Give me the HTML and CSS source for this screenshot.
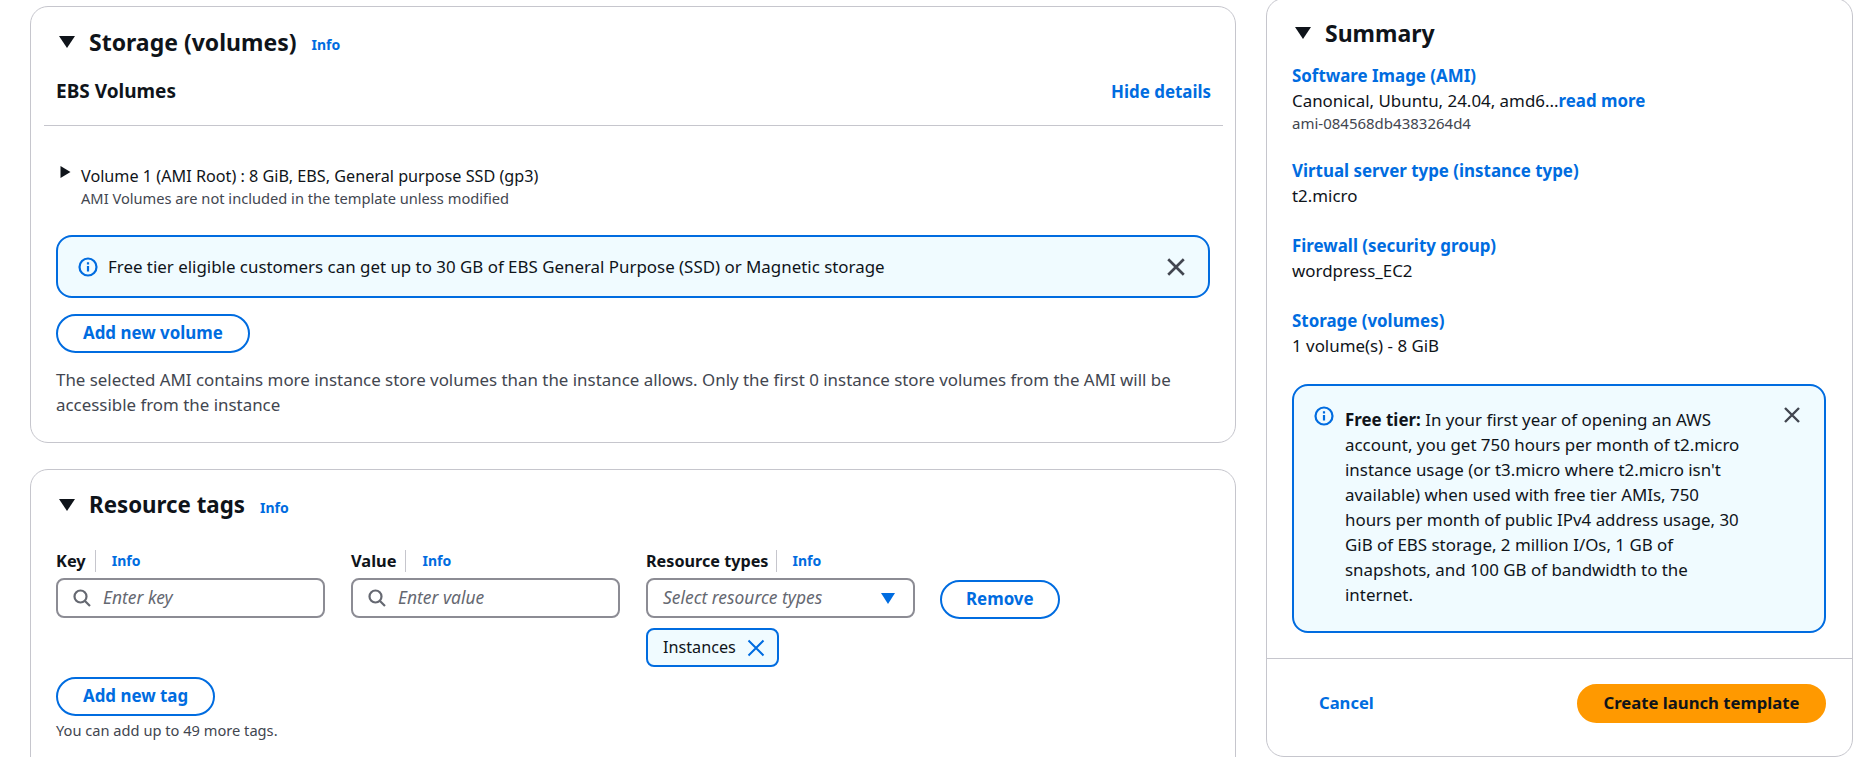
FILE: index.html
```html
<!DOCTYPE html>
<html lang="en">

<head>
    <meta charset="UTF-8">
    <title>Create launch template</title>
    <link rel="stylesheet" href="styles.css">
</head>

<body>
    <div class="page">
        <main class="main-col">
            <section class="card storage-card">
                <div class="card-head">
                    <svg class="caret-down" viewBox="0 0 16 12"><polygon points="0,0 16,0 8,12"/></svg>
                    <h2>Storage (volumes)</h2>
                    <a class="info">Info</a>
                </div>
                <div class="ebs-row">
                    <h3>EBS Volumes</h3>
                    <a class="link">Hide details</a>
                </div>
                <hr class="divider">
                <div class="volume-row">
                    <svg class="caret-right" viewBox="0 0 10 12"><polygon points="0,0 10,6 0,12"/></svg>
                    <div>
                        <div class="volume-title">Volume 1 (AMI Root) : 8 GiB, EBS, General purpose SSD (gp3)</div>
                        <div class="muted">AMI Volumes are not included in the template unless modified</div>
                    </div>
                </div>
                <div class="alert alert-wide">
                    <svg class="icon-info" viewBox="0 0 20 20"><circle cx="10" cy="10" r="8.5"/><path d="M10 9v5.5M10 5.2v2.2"/></svg>
                    <span class="alert-text">Free tier eligible customers can get up to 30 GB of EBS General Purpose (SSD) or Magnetic storage</span>
                    <svg class="icon-close" viewBox="0 0 18 18"><path d="M2 2l14 14M16 2L2 16"/></svg>
                </div>
                <button class="btn add-volume">Add new volume</button>
                <p class="note">The selected AMI contains more instance store volumes than the instance allows. Only the first 0 instance store volumes from the AMI will be accessible from the instance</p>
            </section>

            <section class="card tags-card">
                <div class="card-head">
                    <svg class="caret-down" viewBox="0 0 16 12"><polygon points="0,0 16,0 8,12"/></svg>
                    <h2>Resource tags</h2>
                    <a class="info">Info</a>
                </div>
                <div class="tag-grid">
                    <div class="field">
                        <div class="field-label"><label>Key</label><a class="info">Info</a></div>
                        <div class="input">
                            <svg class="icon-search" viewBox="0 0 18 18"><circle cx="7.5" cy="7.5" r="6"/><path d="M12 12l5 5"/></svg>
                            <span class="placeholder">Enter key</span>
                        </div>
                    </div>
                    <div class="field">
                        <div class="field-label"><label>Value</label><a class="info">Info</a></div>
                        <div class="input">
                            <svg class="icon-search" viewBox="0 0 18 18"><circle cx="7.5" cy="7.5" r="6"/><path d="M12 12l5 5"/></svg>
                            <span class="placeholder">Enter value</span>
                        </div>
                    </div>
                    <div class="field">
                        <div class="field-label"><label class="types-label">Resource types</label><a class="info">Info</a></div>
                        <div class="input select">
                            <span class="placeholder">Select resource types</span>
                            <svg class="caret-blue" viewBox="0 0 14 11"><polygon points="0,0 14,0 7,11"/></svg>
                        </div>
                        <div class="token">
                            <span>Instances</span>
                            <svg class="icon-token-x" viewBox="0 0 18 18"><path d="M1.5 1.5l15 15M16.5 1.5l-15 15"/></svg>
                        </div>
                    </div>
                    <button class="btn remove">Remove</button>
                </div>
                <button class="btn add-tag">Add new tag</button>
                <div class="muted tags-left">You can add up to 49 more tags.</div>
            </section>
        </main>

        <aside class="summary">
            <div class="summary-body">
                <div class="card-head summary-head">
                    <svg class="caret-down" viewBox="0 0 16 12"><polygon points="0,0 16,0 8,12"/></svg>
                    <h2>Summary</h2>
                </div>
                <div class="summary-item">
                    <a class="link">Software Image (AMI)</a>
                    <div>Canonical, Ubuntu, 24.04, amd6...<a class="link">read more</a></div>
                    <div class="muted ami-id">ami-084568db4383264d4</div>
                </div>
                <div class="summary-item">
                    <a class="link">Virtual server type (instance type)</a>
                    <div>t2.micro</div>
                </div>
                <div class="summary-item">
                    <a class="link">Firewall (security group)</a>
                    <div>wordpress_EC2</div>
                </div>
                <div class="summary-item last-item">
                    <a class="link">Storage (volumes)</a>
                    <div>1 volume(s) - 8 GiB</div>
                </div>
                <div class="alert alert-tall">
                    <svg class="icon-info" viewBox="0 0 20 20"><circle cx="10" cy="10" r="8.5"/><path d="M10 9v5.5M10 5.2v2.2"/></svg>
                    <p class="alert-text"><strong>Free tier:</strong> In your first year of opening an AWS account, you get 750 hours per month of t2.micro instance usage (or t3.micro where t2.micro isn't available) when used with free tier AMIs, 750 hours per month of public IPv4 address usage, 30 GiB of EBS storage, 2 million I/Os, 1 GB of snapshots, and 100 GB of bandwidth to the internet.</p>
                    <svg class="icon-close" viewBox="0 0 18 18"><path d="M2 2l14 14M16 2L2 16"/></svg>
                </div>
            </div>
            <div class="summary-foot">
                <a class="link cancel">Cancel</a>
                <button class="btn primary">Create launch template</button>
            </div>
        </aside>
    </div>
</body>

</html>
```

FILE: styles.css
```css
* {
    box-sizing: border-box;
}

body {
    font-family: 'Noto Sans', sans-serif;
    font-size: 16.9px;
    line-height: 25px;
    color: #0f141a;
    background-color: #fff;
    margin: 0;
}

.page {
    display: flex;
    gap: 30px;
    height: 757px;
    padding-left: 30px;
    overflow: hidden;
}

.main-col {
    width: 1206px;
    flex-shrink: 0;
    padding-top: 6px;
}

.card {
    border: 1px solid #c6c6cd;
    border-radius: 18px;
    padding: 20px 24px 25px 25px;
}

.tags-card {
    margin-top: 26px;
    height: 400px;
}

.card-head {
    display: flex;
    align-items: center;
    height: 30px;
}

.card-head h2 {
    font-size: 23px;
    line-height: 30px;
    font-weight: 700;
    margin: 0 15px 0 14px;
}

.tags-card .card-head h2 {
    font-size: 22.3px;
}

.caret-down {
    width: 16px;
    height: 12px;
    margin-left: 3px;
    fill: #0f141a;
}

a {
    cursor: pointer;
}

.info {
    color: #006ce0;
    font-size: 14px;
    font-weight: 700;
    line-height: 20px;
}

.card-head .info {
    margin-top: 5px;
}

.link {
    color: #006ce0;
    font-weight: 700;
}

.ebs-row {
    display: flex;
    justify-content: space-between;
    align-items: center;
    height: 24px;
    margin-top: 22px;
}

.ebs-row h3 {
    font-size: 19px;
    margin: 0;
}

.divider {
    border: none;
    border-top: 1px solid #c6c6cd;
    margin: 22px -12px 0 -12px;
}

.volume-row {
    display: flex;
    margin-top: 38px;
}

.caret-right {
    width: 11px;
    height: 12px;
    margin: 2px 10px 0 4px;
    fill: #0f141a;
}

.volume-title {
    line-height: 24px;
    font-size: 16.2px;
}

.muted {
    font-size: 14.65px;
    line-height: 20px;
    color: #424650;
}

.alert {
    display: flex;
    border: 2px solid #006ce0;
    border-radius: 16px;
    background-color: #f0fbff;
}

.alert-wide {
    align-items: center;
    height: 63px;
    margin: 27px 1px 0 0;
    padding: 0 22px 0 20px;
}

.alert-wide .alert-text {
    flex: 1;
    margin-left: 10px;
}

.alert-wide .icon-close {
    width: 20px;
    height: 20px;
}

.icon-info {
    width: 20px;
    height: 20px;
    flex-shrink: 0;
    fill: none;
    stroke: #006ce0;
    stroke-width: 2.2;
}

.icon-close {
    width: 18px;
    height: 18px;
    flex-shrink: 0;
    fill: none;
    stroke: #424650;
    stroke-width: 2.4;
}

.btn {
    display: block;
    font-family: inherit;
    font-size: 16.9px;
    font-weight: 700;
    height: 39px;
    padding: 0 25px 2px 25px;
    color: #006ce0;
    background-color: #fff;
    border: 2px solid #006ce0;
    border-radius: 20px;
    cursor: pointer;
}

.add-volume {
    margin-top: 16px;
}

.note {
    margin: 14px 0 0 0;
    color: #424650;
}

.tag-grid {
    display: grid;
    grid-template-columns: 269px 269px 269px auto;
    column-gap: 26px;
    justify-content: start;
    margin-top: 29px;
}

.field-label {
    display: flex;
    align-items: center;
    height: 22px;
    line-height: 22px;
    padding-top: 2px;
}

.field-label label {
    font-size: 16.4px;
    font-weight: 700;
    padding-right: 9px;
    border-right: 1px solid #c6c6cd;
    margin-right: 16px;
}

.field-label .types-label {
    font-size: 16.2px;
    padding-right: 8px;
    margin-right: 15px;
}

.input {
    display: flex;
    align-items: center;
    height: 40px;
    margin-top: 7px;
    padding-left: 15px;
    border: 2px solid #8c8c94;
    border-radius: 8px;
    background-color: #fff;
}

.icon-search {
    width: 18px;
    height: 18px;
    fill: none;
    stroke: #656871;
    stroke-width: 2.2;
    margin-right: 12px;
}

.placeholder {
    font-size: 17.4px;
    font-style: italic;
    color: #656871;
    padding-bottom: 2px;
}

.select {
    justify-content: space-between;
    padding-right: 18px;
}

.caret-blue {
    width: 14px;
    height: 11px;
    fill: #006ce0;
}

.token {
    display: inline-flex;
    align-items: center;
    height: 39px;
    margin-top: 10px;
    padding: 0 12px 0 15px;
    font-size: 16.2px;
    border: 2px solid #006ce0;
    border-radius: 8px;
    background-color: #f0fbff;
}

.icon-token-x {
    width: 18px;
    height: 18px;
    margin-left: 11px;
    fill: none;
    stroke: #006ce0;
    stroke-width: 2;
}

.remove {
    margin: 31px 0 0 -1px;
    padding: 0 24px 2px 24px;
}

.add-tag {
    margin-top: 10px;
}

.tags-left {
    margin-top: 4px;
}

.summary {
    width: 587px;
    flex-shrink: 0;
    height: 759px;
    margin-top: -2px;
    border: 1px solid #c6c6cd;
    border-radius: 18px;
}

.summary-body {
    padding: 19px 26px 25px 25px;
    border-bottom: 1px solid #c6c6cd;
}

.summary-head {
    margin-bottom: 15px;
}

.summary-item {
    margin-bottom: 25px;
}

.last-item {
    margin-bottom: 26px;
}

.ami-id {
    font-size: 15px;
}

.alert-tall {
    height: 249px;
    padding: 20px 23px 0 20px;
}

.alert-tall .alert-text {
    width: 400px;
    margin: 1px 38px 0 11px;
}

.summary-foot {
    display: flex;
    justify-content: space-between;
    align-items: center;
    padding: 25px 26px 0 52px;
}

.cancel {
    font-size: 16.6px;
    margin-top: -2px;
}

.primary {
    width: 249px;
    padding: 0 0 2px 0;
    font-size: 16.7px;
    color: #0f141a;
    background-color: #ff9900;
    border-color: #ff9900;
}
```
